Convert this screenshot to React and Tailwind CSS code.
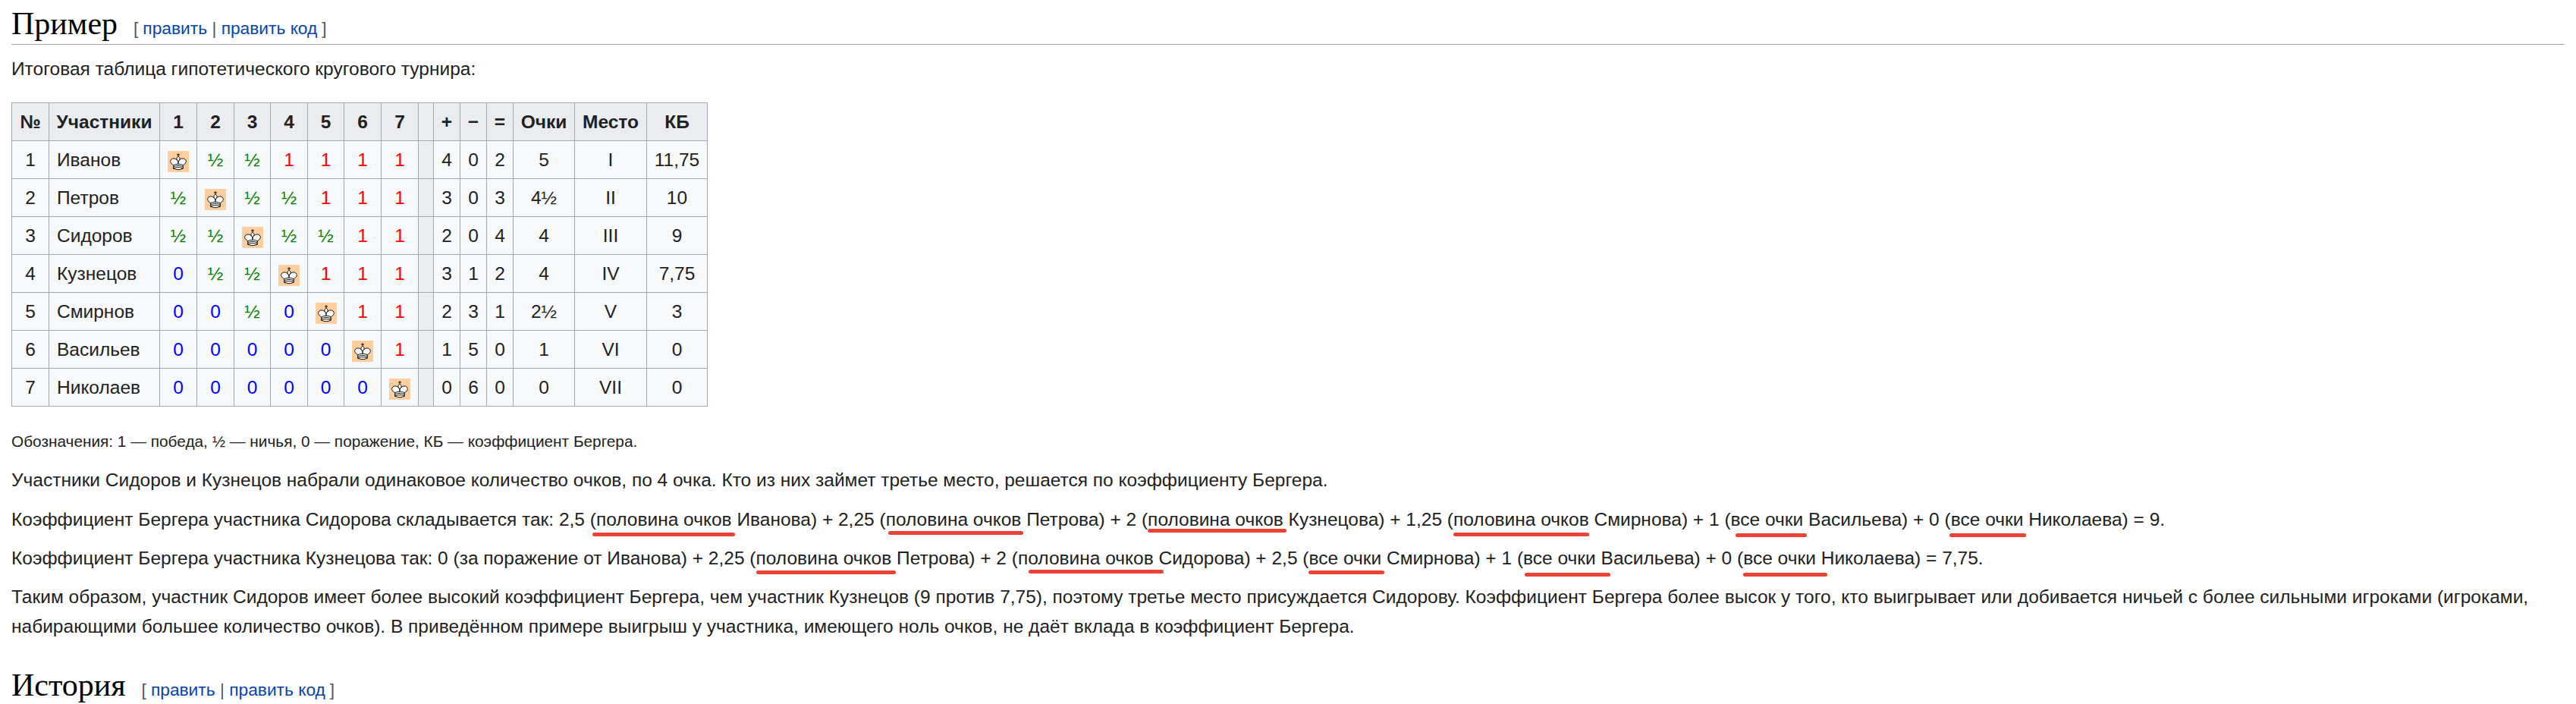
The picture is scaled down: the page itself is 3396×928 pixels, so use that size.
import React from "react";

const King = () => (
  <span className="inline-flex h-[28px] w-[28px] items-center justify-center bg-[#ffce9e] align-middle">
    <svg viewBox="0 0 45 45" className="h-[28px] w-[28px]">
      <g fill="none" fillRule="evenodd" stroke="#000" strokeWidth="1.5" strokeLinecap="round" strokeLinejoin="round">
        <path d="M22.5 11.63V6M20 8h5" strokeLinejoin="miter" />
        <path d="M22.5 25s4.5-7.5 3-10.5c0 0-1-2.5-3-2.5s-3 2.5-3 2.5c-1.5 3 3 10.5 3 10.5" fill="#fff" strokeLinecap="butt" strokeLinejoin="miter" />
        <path d="M12.5 37c5.5 3.5 14.5 3.5 20 0v-7s9-4.5 6-10.5c-4-6.5-13.5-3.5-16 4V27v-3.5c-2.5-7.5-12-10.5-16-4-3 6 6 10.5 6 10.5v7" fill="#fff" />
        <path d="M12.5 30c5.5-3 14.5-3 20 0m-20 3.5c5.5-3 14.5-3 20 0m-20 3.5c5.5-3 14.5-3 20 0" />
      </g>
    </svg>
  </span>
);

const widths = [
  "w-[49px]", "w-[146px]", "w-[49px]", "w-[49px]", "w-[48px]", "w-[49px]", "w-[48px]", "w-[49px]", "w-[49px]",
  "w-[20px]", "w-[35px]", "w-[35px]", "w-[35px]", "w-[81px]", "w-[95px]", "w-[80px]",
];
const heads = ["№", "Участники", "1", "2", "3", "4", "5", "6", "7", "", "+", "−", "=", "Очки", "Место", "КБ"];
const rows = [
  ["1", "Иванов", "K", "½", "½", "1", "1", "1", "1", "4", "0", "2", "5", "I", "11,75"],
  ["2", "Петров", "½", "K", "½", "½", "1", "1", "1", "3", "0", "3", "4½", "II", "10"],
  ["3", "Сидоров", "½", "½", "K", "½", "½", "1", "1", "2", "0", "4", "4", "III", "9"],
  ["4", "Кузнецов", "0", "½", "½", "K", "1", "1", "1", "3", "1", "2", "4", "IV", "7,75"],
  ["5", "Смирнов", "0", "0", "½", "0", "K", "1", "1", "2", "3", "1", "2½", "V", "3"],
  ["6", "Васильев", "0", "0", "0", "0", "0", "K", "1", "1", "5", "0", "1", "VI", "0"],
  ["7", "Николаев", "0", "0", "0", "0", "0", "0", "K", "0", "6", "0", "0", "VII", "0"],
];
const tone = { "1": "text-[#ff0000]", "½": "text-[#008000]", "0": "text-[#0000ff]" };

const EditLinks = ({ gap }) => (
  <span className={`font-['Liberation_Sans',sans-serif] text-[22.75px] leading-[30px] text-[#54595d] ${gap}`}>
    <span className="mr-[6px]">[</span>
    <span className="text-[#0645ad]">править</span>
    <span> | </span>
    <span className="text-[#0645ad]">править код</span>
    <span className="ml-[6px]">]</span>
  </span>
);

const U = ({ children, line }) => (
  <span className="relative">
    {children}
    <span className={`absolute h-[5px] rounded-full bg-[#ea4335] ${line}`} />
  </span>
);

export default function App() {
  return (
    <div className="min-h-[928px] w-full overflow-hidden bg-white px-[15px] font-['Liberation_Sans',Arial,sans-serif] text-[24.5px] leading-[39.2px] text-[#202122]">
      <div className="flex items-baseline border-b border-[#a2a9b1] pt-[6px] pb-[1px] font-['Liberation_Serif',serif] text-[42px] leading-[51px] text-black">
        <span>Пример</span>
        <EditLinks gap="ml-[21px]" />
      </div>
      <p className="mt-[12px] mb-[25px]">Итоговая таблица гипотетического кругового турнира:</p>
      <table className="w-[917px] table-fixed border-collapse border border-[#a2a9b1] bg-[#f8f9fa] text-[24.5px] leading-[37px]">
        <thead>
          <tr className="h-[50px] bg-[#eaecf0]">
            {heads.map((h, i) => (
              <th key={i} className={`border border-[#a2a9b1] p-0 text-center font-bold ${widths[i]}`}>{h}</th>
            ))}
          </tr>
        </thead>
        <tbody>
          {rows.map((r) => (
            <tr key={r[0]} className="h-[50px]">
              {r.map((c, i) => {
                const sep = i === 9;
                const score = i >= 2 && i <= 8;
                return (
                  <React.Fragment key={i}>
                    {sep && <td className="border border-[#a2a9b1] bg-[#eaecf0] p-0" />}
                    <td className={`border border-[#a2a9b1] p-0 ${i === 1 ? "pl-[10px] text-left" : "text-center"} ${score ? tone[c] || "" : ""}`}>
                      {c === "K" ? <King /> : c}
                    </td>
                  </React.Fragment>
                );
              })}
            </tr>
          ))}
        </tbody>
      </table>
      <p className="mt-[26px] text-[20.8px] leading-[39.2px]">Обозначения: 1 — победа, ½ — ничья, 0 — поражение, КБ — коэффициент Бергера.</p>
      <p className="mt-[12px]">Участники Сидоров и Кузнецов набрали одинаковое количество очков, по 4 очка. Кто из них займет третье место, решается по коэффициенту Бергера.</p>
      <p className="mt-[12px]">
        Коэффициент Бергера участника Сидорова складывается так: 2,5 (<U line="-left-[5px] -right-[4px] top-[31px]">половина очков</U> Иванова) + 2,25 (<U line="left-[3px] -right-[3px] top-[29px]">половина очков</U> Петрова) + 2 (<U line="left-0 -right-[4px] top-[26px]">половина очков</U> Кузнецова) + 1,25 (<U line="left-0 right-0 top-[31px]">половина очков</U> Смирнова) + 1 (<U line="left-[6px] -right-[5px] top-[32px]">все очки</U> Васильева) + 0 (<U line="-left-[2px] -right-[4px] top-[32px]">все очки</U> Николаева) = 9.
      </p>
      <p className="mt-[12px]">
        Коэффициент Бергера участника Кузнецова так: 0 (за поражение от Иванова) + 2,25 (<U line="left-0 -right-[6px] top-[30px]">половина очков</U> Петрова) + 2 (<U line="left-[14px] -right-[13px] top-[29px]">половина очков</U> Сидорова) + 2,5 (<U line="-left-[1px] -right-[4px] top-[30px]">все очки</U> Смирнова) + 1 (<U line="left-[2px] -right-[19px] top-[33px]">все очки</U> Васильева) + 0 (<U line="left-0 -right-[15px] top-[33px]">все очки</U> Николаева) = 7,75.
      </p>
      <p className="mt-[12px]">
        Таким образом, участник Сидоров имеет более высокий коэффициент Бергера, чем участник Кузнецов (9 против 7,75), поэтому третье место присуждается Сидорову. Коэффициент Бергера более высок у того, кто выигрывает или добивается ничьей с более сильными игроками (игроками, набирающими большее количество очков). В приведённом примере выигрыш у участника, имеющего ноль очков, не даёт вклада в коэффициент Бергера.
      </p>
      <div className="mt-[33px] flex items-baseline font-['Liberation_Serif',serif] text-[42px] leading-[51px] text-black">
        <span>История</span>
        <EditLinks gap="ml-[21px]" />
      </div>
    </div>
  );
}
